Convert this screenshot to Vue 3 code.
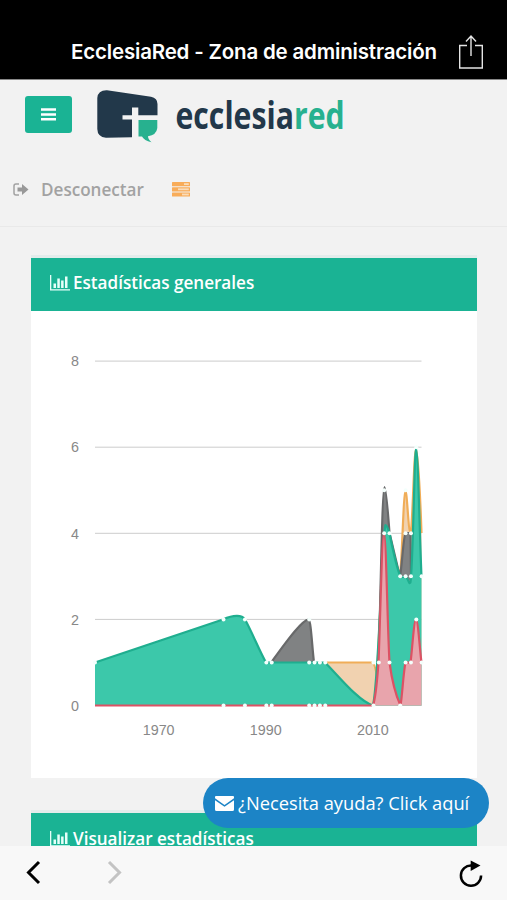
<template>
  <div class="screen">
    <header class="titlebar">
      <h1>EcclesiaRed - Zona de administración</h1>
      <svg class="share" viewBox="0 0 26 36" width="26" height="36">
        <path d="M9 11.5H1.7V34H24.3V11.5H17" />
        <path d="M13 22V2.5M8 7.5L13 2L18 7.5" />
      </svg>
    </header>

    <main class="page">
      <div class="brand">
        <button class="menu" aria-label="Menu">
          <svg viewBox="0 0 15 13" width="15" height="13">
            <path d="M0 .3H15V2.800H0ZM0 5.200H15V7.700H0ZM0 10.100H15V12.600H0Z" />
          </svg>
        </button>
        <svg class="logo" viewBox="95 88 260 58" width="260" height="58">
          <path class="navy" d="M107 90.3L151 96.7Q157.500 98 157.500 104V115.300H138.300V107.500H132V115.300H122.500V119.500H132V137.300L106 137.800Q97.500 137 97.300 129V98Q98 90 107 90.300Z" />
          <path class="green" d="M138.500 120H157.300V128Q156.500 135 148 136.300Q148 139.500 151.500 142.200Q144 140.500 142 136.500H138.500Z" />
          <text transform="translate(175.500 128.500) scale(.795 1)">ecclesia<tspan class="green">red</tspan></text>
        </svg>
      </div>

      <nav class="links">
        <svg class="exit" viewBox="0 0 16 13" width="16" height="13">
          <path class="frame" d="M6 1H3Q1 1 1 3V10Q1 12 3 12H6" />
          <path class="arrow" d="M4.500 4.500H9V1L15.500 6.500L9 12V8.500H4.500Z" />
        </svg>
        <a>Desconectar</a>
        <svg class="tasks" viewBox="0 0 18 15" width="18" height="15">
          <g v-for="(t, i) in tasks" :key="i">
            <rect x="0" :y="i * 5.2" width="18" height="4.200" rx=".5" />
            <rect class="hole" :x="t" :y="i * 5.2 + 1.2" :width="16.8 - t" height="1.800" />
          </g>
        </svg>
      </nav>

      <section class="panel">
        <h2>
          <svg class="bars" viewBox="0 0 20 16" width="20" height="16">
            <path d="M0 0H1.300V14.200H20V15.500H0ZM3.500 8.500H6V13H3.500ZM7.300 3.500H9.800V13H7.300ZM11.100 5.500H13.600V13H11.100ZM15 1.500H17.500V13H15Z" />
          </svg>
          <span>Estadísticas generales</span>
        </h2>
        <svg class="chart" viewBox="31 311 446 467" width="446" height="467">
          <g v-for="tick in [0, 2, 4, 6, 8]" :key="tick">
            <line class="grid" x1="95" x2="421.500" :y1="py(tick)" :y2="py(tick)" />
            <text x="79" :y="py(tick) + 5.2" text-anchor="end">{{ tick }}</text>
          </g>
          <text v-for="year in [1970, 1990, 2010]" :key="year" :x="px(year) - 0.6" y="735" text-anchor="middle">{{ year }}</text>

          <g v-for="s in series" :key="s.name" :class="s.name">
            <path class="area" :d="s.line + s.close" />
            <path class="line" :d="s.line" />
          </g>
          <circle v-for="(p, i) in points" :key="i" class="dot" :cx="px(p[0])" :cy="py(p[1])" r="2" />
        </svg>
      </section>

      <section class="panel next">
        <h2>
          <svg class="bars" viewBox="0 0 20 16" width="20" height="16">
            <path d="M0 0H1.300V14.200H20V15.500H0ZM3.500 8.500H6V13H3.500ZM7.300 3.500H9.800V13H7.300ZM11.100 5.500H13.600V13H11.100ZM15 1.500H17.500V13H15Z" />
          </svg>
          <span>Visualizar estadísticas</span>
        </h2>
      </section>
    </main>

    <a class="help">
      <svg viewBox="0 0 19 15" width="19" height="15">
        <path d="M1 0H18Q19 0 19 1V2.300L9.500 9L0 2.300V1Q0 0 1 0ZM0 4.200L9.500 10.800L19 4.200V13.500Q19 15 17.500 15H1.500Q0 15 0 13.500Z" />
      </svg>
      <span>¿Necesita ayuda? Click aquí</span>
    </a>

    <footer class="toolbar">
      <svg class="chev" viewBox="0 0 15 26" width="15" height="26"><path d="M13 2L2.500 12.500L13 23" /></svg>
      <svg class="chev off" viewBox="0 0 15 26" width="15" height="26"><path d="M2 2L12.500 12.500L2 23" /></svg>
      <svg class="reload" viewBox="0 0 24 28" width="24" height="28">
        <path class="ring" d="M12.500 5.500A10.100 10.100 0 1 0 22.100 15.600" />
        <path d="M11.700 0.500L21.500 5.500L11.700 11Z" />
      </svg>
    </footer>
  </div>
</template>

<script setup>
const px = (year) => 95 + (year - 1958) * 5.355
const py = (value) => 705.5 - value * 43.05

// filled part of each progress row in the tasks icon
const tasks = [12, 6, 10]

// back to front
const series = [
  {
    name: 'orange',
    line: 'M325 662.500H372C374 662.500 375.500 668 377 676L384 533L389 576L400 577C402 562 403.500 491 405.500 491C407 491 408.500 533 410.500 533C412.500 530 414 449 416 449C418 449 420 490 421.500 533',
    close: 'V705.500H373Q345 690 325 662.500Z',
  },
  {
    name: 'gray',
    line: 'M271 662.500C282 648 301 620 308.500 619.500C311 620 312 646 314 662.500M378.500 662.500C380.500 610 382 487 384.500 487C386 487 388 512 389.500 533L400 577C402 565 403.500 536 405.500 533H410.500L411 577',
    close: '',
  },
  {
    name: 'green',
    line: 'M95 662.500L223 619.500C234 614.500 242 615 245 619.500C252 632 259 650 266 662.500H325C336 673 358 701 373 705.500C379 680 382 533 385.500 525C387 525 388 529 389.500 533C393 551 397 568 400.500 577H405.500C408 577 409 586 410.500 582C413 567 414.500 448 416 448C418 448 419.500 530 421.500 577',
    close: 'V705.500H95Z',
  },
  {
    name: 'red',
    line: 'M95 705.500H373C376 697 377 682 378.500 662.500C380 628 382 533 384 533C386 533 387.500 628 389.500 662.500C392 681 397 698 400.500 705.500C402 698 403.500 671 405.500 662.500C407 661 409 664 410.500 662.500C412 652 414 619.500 416 619.500C418 619.500 420 652 421.500 662.500',
    close: 'V705.500Z',
  },
]

const zeros = [1982, 1986, 1990, 1991, 1998, 1999, 2000, 2001, 2010, 2015].map((y) => [y, 0])
const points = [
  ...zeros,
  [1958, 1], [1982, 2], [1986, 2], [1990, 1], [1991, 1],
  [1998, 2], [1998, 1], [1999, 1], [2000, 1], [2001, 1],
  [2010, 1], [2011, 1], [2012, 5], [2012, 4], [2013, 4], [2013, 1],
  [2015, 3], [2016, 3], [2017, 3], [2016, 4], [2017, 4], [2016, 5],
  [2016, 1], [2017, 1], [2018, 6], [2018, 2], [2019, 3], [2019, 1],
]
</script>

<style>
body {
  margin: 0;
}
</style>

<style scoped>
.screen {
  position: relative;
  display: flex;
  flex-direction: column;
  width: 507px;
  height: 900px;
  overflow: hidden;
  background: #f2f2f2;
  font-family: "Open Sans", sans-serif;
}

.titlebar {
  display: flex;
  flex: none;
  box-sizing: border-box;
  height: 80px;
  padding: 34px 23px 0 71px;
  justify-content: space-between;
  background: #000;
  border-bottom: 1px solid #888;
}
.titlebar h1 {
  margin: 5px 0 0;
  font: 600 20.500px/26px Inter, sans-serif;
  letter-spacing: -0.180px;
  color: #fff;
  white-space: nowrap;
}
.share {
  fill: none;
  stroke: #e4e4e4;
  stroke-width: 1.4;
}

.page {
  flex: 1;
  min-height: 0;
  overflow: hidden;
}
.brand {
  display: flex;
  height: 66px;
  padding: 8px 0 0 25px;
  gap: 23px;
}
.menu {
  display: flex;
  align-items: center;
  justify-content: center;
  width: 47px;
  height: 37px;
  margin: 8px 0 0;
  padding: 0;
  border: 0;
  border-radius: 3px;
  background: #1ab394;
}
.menu svg {
  fill: #fff;
}
.logo text {
  font-family: "Open Sans", sans-serif;
  font-size: 38px;
  font-weight: 700;
  fill: #22384a;
}
.navy {
  fill: #22384a;
}
.logo .green {
  fill: #27b18f;
}

.links {
  display: flex;
  align-items: center;
  box-sizing: border-box;
  height: 73px;
  padding: 0 0 1px 13px;
  border-bottom: 1px solid #e9e9e9;
  color: #999c9e;
}
.links a {
  width: 131px;
  margin-left: 12px;
  font-size: 17.100px;
  font-weight: 600;
  color: #a2a2a2;
}
.exit .frame {
  fill: none;
  stroke: #a2a2a2;
  stroke-width: 1.500;
}
.exit .arrow {
  fill: #999;
}
.tasks {
  fill: #f8ac59;
}
.tasks .hole {
  fill: #fbdcb8;
}

.panel {
  width: 445.500px;
  margin: 28px 0 0 31px;
  background: #fff;
  border-top: 3px solid #e3eceb;
}
.panel h2 {
  display: flex;
  box-sizing: border-box;
  height: 53px;
  margin: 0;
  padding: 13px 0 0 19px;
  gap: 3px;
  font-size: 17.100px;
  font-weight: 600;
  line-height: 24px;
  color: #fff;
  background: #1ab394;
}
.panel.next {
  margin-top: 32px;
}
.panel.next h2 {
  padding-top: 14px;
}
.bars {
  margin-top: 4px;
  fill: #e6fff9;
}
.chart {
  display: block;
}
.chart text {
  font: 14.300px "Liberation Sans", sans-serif;
  fill: #888;
}
.grid {
  stroke: #ccc;
  stroke-width: 1;
}
.line {
  fill: none;
  stroke-width: 2.200;
  stroke-linejoin: round;
}
.orange .area {
  fill: #f1d2b0;
}
.orange .line {
  stroke: #f0ad58;
}
.gray .area {
  fill: #808283;
}
.gray .line {
  stroke: #68696a;
}
.chart .green .area {
  fill: #3cc8aa;
}
.chart .green .line {
  stroke: #1fae8f;
}
.red .area {
  fill: #e8a4ac;
}
.red .line {
  stroke: #dc5264;
}
.dot {
  fill: #f4fffc;
}

.help {
  position: absolute;
  left: 203px;
  top: 778px;
  display: flex;
  align-items: center;
  box-sizing: border-box;
  width: 286px;
  height: 50px;
  padding-left: 12px;
  gap: 4px;
  border-radius: 25px;
  background: #1c84c6;
  color: #fff;
  font-size: 18.300px;
  white-space: nowrap;
}
.help svg {
  fill: #fff;
}
.help span {
  padding-bottom: 2px;
}

.toolbar {
  display: flex;
  flex: none;
  box-sizing: border-box;
  height: 54px;
  padding: 14px 24px 0 26px;
  background: #f8f8f8;
}
.chev {
  fill: none;
  stroke: #000;
  stroke-width: 3;
}
.chev.off {
  margin-left: 66px;
  stroke: #c3c3c3;
}
.reload {
  margin-left: auto;
}
.reload .ring {
  fill: none;
  stroke: #000;
  stroke-width: 2.500;
}
</style>
